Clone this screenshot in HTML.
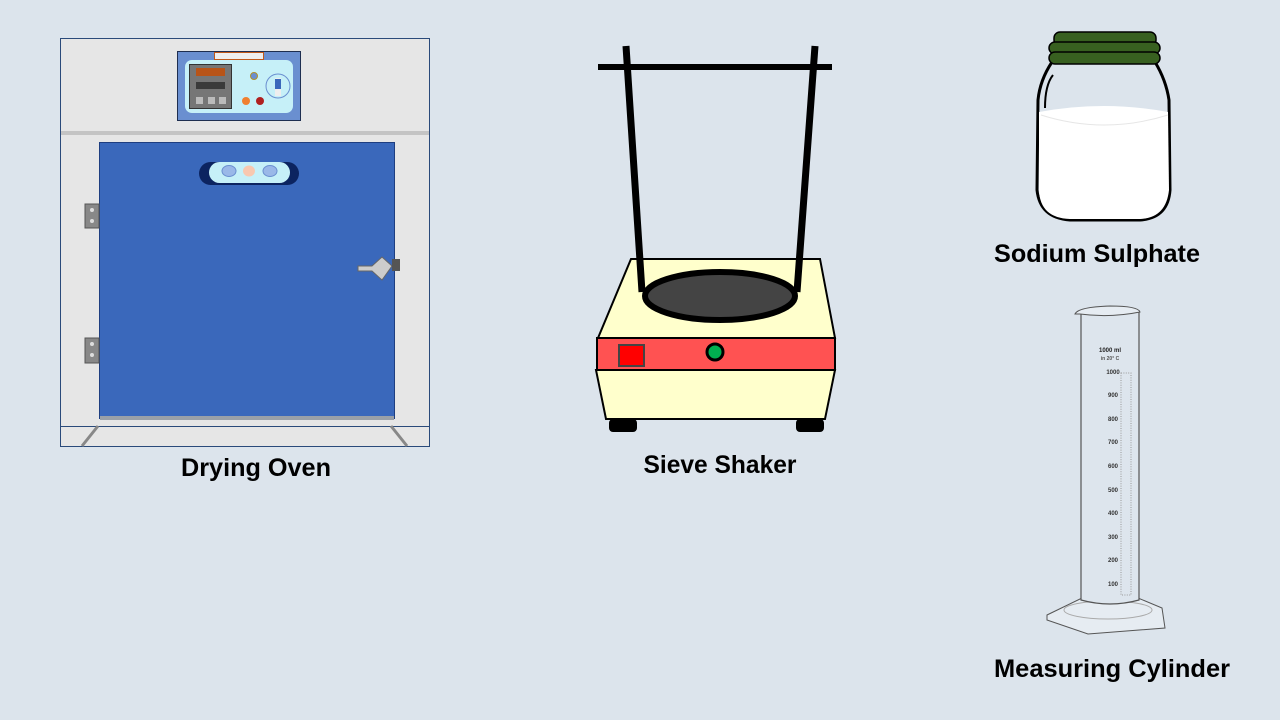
<!DOCTYPE html>
<html><head><meta charset="utf-8"><style>
html,body{margin:0;padding:0;background:#dce4ec;width:1280px;height:720px;overflow:hidden}
text{font-family:"Liberation Sans",sans-serif;font-weight:bold}
</style></head><body>
<svg width="1280" height="720" viewBox="0 0 1280 720" xmlns="http://www.w3.org/2000/svg">
<rect width="1280" height="720" fill="#dce4ec"/>
<!-- Oven -->
<rect x="60.5" y="38.5" width="369" height="408" fill="#e6e6e6" stroke="#2a4a7a"/>
<rect x="61" y="131" width="368" height="4" fill="#c4c4c4"/>
<rect x="177.5" y="51.5" width="123" height="69" fill="#6a8fd0" stroke="#1e2e50"/>
<rect x="214.5" y="52.5" width="49" height="7" fill="#eee" stroke="#c0581a"/>
<rect x="185" y="60" width="108" height="53" rx="7" fill="#c6f0f8"/>
<rect x="189.5" y="64.5" width="42" height="44" fill="#767676" stroke="#333"/>
<rect x="196" y="68" width="29" height="8" fill="#b85418"/>
<rect x="196" y="82" width="29" height="7" fill="#3a3a3a"/>
<rect x="196" y="97" width="7" height="7" fill="#bbb"/><rect x="208" y="97" width="7" height="7" fill="#bbb"/><rect x="219" y="97" width="7" height="7" fill="#bbb"/>
<circle cx="254" cy="76" r="3.5" fill="#6a8fd0" stroke="#b0902a"/>
<circle cx="246" cy="101" r="4" fill="#f08030"/>
<circle cx="260" cy="101" r="4" fill="#b02020"/>
<circle cx="278" cy="86" r="12" fill="none" stroke="#6a8fd0"/>
<rect x="275" y="78" width="6" height="18" fill="#eee"/><rect x="275" y="79" width="6" height="10" fill="#3a68bb"/>
<rect x="99.5" y="142.5" width="295" height="276" fill="#3a68bb" stroke="#1e3e80"/>
<rect x="100" y="416" width="294" height="4" fill="#9aa0a8"/>
<rect x="199" y="162" width="100" height="23" rx="11.5" fill="#0c2460"/>
<rect x="209" y="162" width="81" height="21" rx="10.5" fill="#c6f0f8"/>
<ellipse cx="229" cy="171" rx="7" ry="5.5" fill="#9ab8e8" stroke="#6a8fd0"/>
<ellipse cx="249" cy="171" rx="6" ry="5.5" fill="#f8c8b0"/>
<ellipse cx="270" cy="171" rx="7" ry="5.5" fill="#9ab8e8" stroke="#6a8fd0"/>
<rect x="85" y="204" width="14" height="24" fill="#888" stroke="#555"/><circle cx="92" cy="210" r="2" fill="#ddd"/><circle cx="92" cy="221" r="2" fill="#ddd"/>
<rect x="85" y="338" width="14" height="25" fill="#888" stroke="#555"/><circle cx="92" cy="344" r="2" fill="#ddd"/><circle cx="92" cy="355" r="2" fill="#ddd"/>
<path d="M358 266 L372 266 L382 257 L392 266 L382 280 L372 271 L358 271Z" fill="#ccc" stroke="#666"/>
<rect x="392" y="259" width="8" height="12" fill="#555"/>
<line x1="60" y1="426.5" x2="430" y2="426.5" stroke="#2a4a7a"/>
<path d="M98 426 L82 446 M391 426 L407 446" stroke="#888" stroke-width="3"/>
<text x="256" y="476" font-size="25" text-anchor="middle" textLength="150" lengthAdjust="spacingAndGlyphs" fill="#000">Drying Oven</text>
<!-- Sieve shaker -->
<path d="M631 259 L820 259 L835 338 L598 338Z" fill="#ffffcc" stroke="#000" stroke-width="2"/>
<rect x="597" y="338" width="238" height="32" fill="#ff5252" stroke="#000" stroke-width="2"/>
<path d="M596 370 L835 370 L825 419 L606 419Z" fill="#ffffcc" stroke="#000" stroke-width="2"/>
<rect x="609" y="419" width="28" height="13" rx="4" fill="#000"/>
<rect x="796" y="419" width="28" height="13" rx="4" fill="#000"/>
<rect x="619" y="345" width="25" height="21" fill="#ff0000" stroke="#444" stroke-width="2"/>
<circle cx="715" cy="352" r="8" fill="#00b050" stroke="#000" stroke-width="3"/>
<ellipse cx="720" cy="296" rx="75" ry="24" fill="#444" stroke="#000" stroke-width="6"/>
<path d="M626 46 L642 292 M815 46 L797 292" stroke="#000" stroke-width="7"/>
<rect x="598" y="64" width="234" height="6" fill="#000"/>
<text x="720" y="473" font-size="25" text-anchor="middle" textLength="153" lengthAdjust="spacingAndGlyphs" fill="#000">Sieve Shaker</text>
<!-- Jar -->
<path d="M1052 62 Q1040 80 1038 100 L1037 190 Q1040 218 1070 220 L1140 220 Q1168 218 1170 190 L1169 100 Q1166 80 1155 62Z" fill="#dce4ec" stroke="#000" stroke-width="3"/>
<path d="M1039 112 Q1104 100 1168 112 L1169 190 Q1166 218 1140 219 L1070 219 Q1040 218 1039 190Z" fill="#fff"/>
<path d="M1041 115 Q1104 135 1168 115" fill="none" stroke="#e6e6e6"/>
<path d="M1053 75 Q1045 85 1045 108" fill="none" stroke="#000" stroke-width="2"/>
<rect x="1054" y="32" width="102" height="14" rx="6" fill="#386020" stroke="#000" stroke-width="1.5"/>
<rect x="1049" y="42" width="111" height="12" rx="6" fill="#386020" stroke="#000" stroke-width="1.5"/>
<rect x="1049" y="52" width="111" height="12" rx="6" fill="#386020" stroke="#000" stroke-width="1.5"/>
<text x="1097" y="262" font-size="25" text-anchor="middle" textLength="206" lengthAdjust="spacingAndGlyphs" fill="#000">Sodium Sulphate</text>
<!-- Cylinder -->
<path d="M1047 615 L1082 598 L1138 598 L1162 608 L1165 628 L1088 634 L1047 620Z" fill="#e6ecf2" stroke="#555"/>
<ellipse cx="1108" cy="610" rx="44" ry="9" fill="none" stroke="#aaa"/>
<path d="M1081 312 L1081 600 Q1110 608 1139 600 L1139 312" fill="#dde5ed" stroke="#555" stroke-width="1.2"/>
<path d="M1075 314 Q1078 307 1110 306 Q1138 306 1140 312 Q1110 318 1080 314Z" fill="#e6ecf2" stroke="#555"/>
<text x="1110" y="352" font-size="6" text-anchor="middle" fill="#222">1000 ml</text>
<text x="1110" y="360" font-size="5" font-weight="normal" text-anchor="middle" fill="#555">in 20° C</text>
<g font-size="6" font-weight="normal" fill="#333" text-anchor="middle">
<text x="1113" y="374">1000</text><text x="1113" y="397">900</text><text x="1113" y="421">800</text><text x="1113" y="444">700</text><text x="1113" y="468">600</text><text x="1113" y="492">500</text><text x="1113" y="515">400</text><text x="1113" y="539">300</text><text x="1113" y="562">200</text><text x="1113" y="586">100</text>
</g>
<rect x="1121" y="373" width="10" height="222" fill="none" stroke="#999" stroke-dasharray="1 1.4"/>
<text x="1112" y="677" font-size="25" text-anchor="middle" textLength="236" lengthAdjust="spacingAndGlyphs" fill="#000">Measuring Cylinder</text>
</svg>
</body></html>
